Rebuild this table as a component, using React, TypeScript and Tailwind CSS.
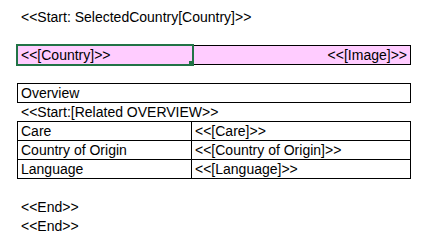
export default function App() {
    const text = "flex items-center px-[3px] leading-none whitespace-nowrap";
    const rows = [
        ["Care", "<<[Care]>>"],
        ["Country of Origin", "<<[Country of Origin]>>"],
        ["Language", "<<[Language]>>"],
    ];
    return (
        <div
            className="w-[439px] h-[250px] bg-white text-black text-[14px] pt-[7px] pl-[17px] overflow-hidden"
            style={{ fontFamily: '"Liberation Sans", Arial, sans-serif' }}
        >
            <div className="w-[394px] flex flex-col">
                {/* Start line */}
                <div className={`${text} h-[19px] pl-[4px]`}>&lt;&lt;Start: SelectedCountry[Country]&gt;&gt;</div>
                <div className="h-[19px]" />

                {/* Pink row with selected cell */}
                <div className="relative h-[20px] flex border border-black bg-[#ffccff]">
                    <div className={`${text} w-[174px] h-full`}>&lt;&lt;[Country]&gt;&gt;</div>
                    <div className={`${text} flex-1 h-full justify-end`}>&lt;&lt;[Image]&gt;&gt;</div>
                    <div className="absolute left-[-2px] top-[-2px] w-[178px] h-[22px] border-2 border-[#217346]" />
                    <div className="absolute left-[171px] top-[15px] w-[5px] h-[5px] bg-[#217346]" />
                </div>
                <div className="h-[18px]" />

                {/* Overview */}
                <div className={`${text} h-[20px] border border-black`}>Overview</div>
                <div className={`${text} h-[18px] pl-[4px]`}>&lt;&lt;Start:[Related OVERVIEW&gt;&gt;</div>

                {/* Table */}
                <div className="flex flex-col border-b border-black">
                    {rows.map(([k, v]) => (
                        <div key={k} className="flex h-[19px] border-t border-l border-r border-black">
                            <div className={`${text} w-[174px] border-r border-black`}>{k}</div>
                            <div className={`${text} flex-1`}>{v}</div>
                        </div>
                    ))}
                </div>
                <div className="h-[18px]" />

                <div className={`${text} h-[19px] pl-[4px]`}>&lt;&lt;End&gt;&gt;</div>
                <div className={`${text} h-[19px] pl-[4px]`}>&lt;&lt;End&gt;&gt;</div>
            </div>
        </div>
    );
}
